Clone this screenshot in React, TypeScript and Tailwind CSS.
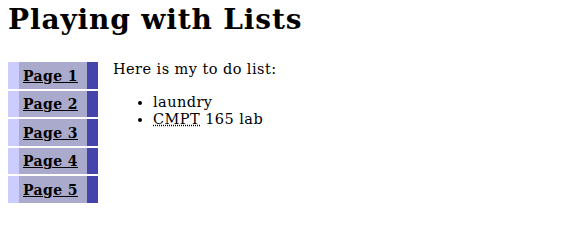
import React from "react";

const pages = ["Page 1", "Page 2", "Page 3", "Page 4", "Page 5"];

export default function App() {
  return (
    <div className="bg-white px-2 text-black" style={{ fontFamily: '"DejaVu Serif", serif' }}>
      <h1 className="pt-[3px] text-[28px] leading-[33px] font-bold tracking-[0.85px]">Playing with Lists</h1>
      <div className="mt-[24px] flex items-start gap-[15px]">
        <nav className="mt-[2px] flex w-[90px] flex-col gap-[2px]">
          {pages.map((p) => (
            <a
              key={p}
              href="#"
              className="block h-[26.5px] border-l-[11px] border-r-[11px] border-l-[#ccccff] border-r-[#4444aa] bg-[#aaaacc] pl-[4px] pt-[5.5px] text-[14px] leading-[17px] font-bold tracking-[0.4px] underline"
            >
              {p}
            </a>
          ))}
        </nav>
        <div className="mt-[1px] text-[14.5px] leading-[17px] tracking-[0.44px]">
          <p>Here is my to do list:</p>
          <ul className="mt-[16px] list-disc pl-[40px]">
            <li>laundry</li>
            <li>
              <abbr title="Computing Science" className="underline decoration-dotted">
                CMPT
              </abbr>{" "}
              165 lab
            </li>
          </ul>
        </div>
      </div>
    </div>
  );
}
